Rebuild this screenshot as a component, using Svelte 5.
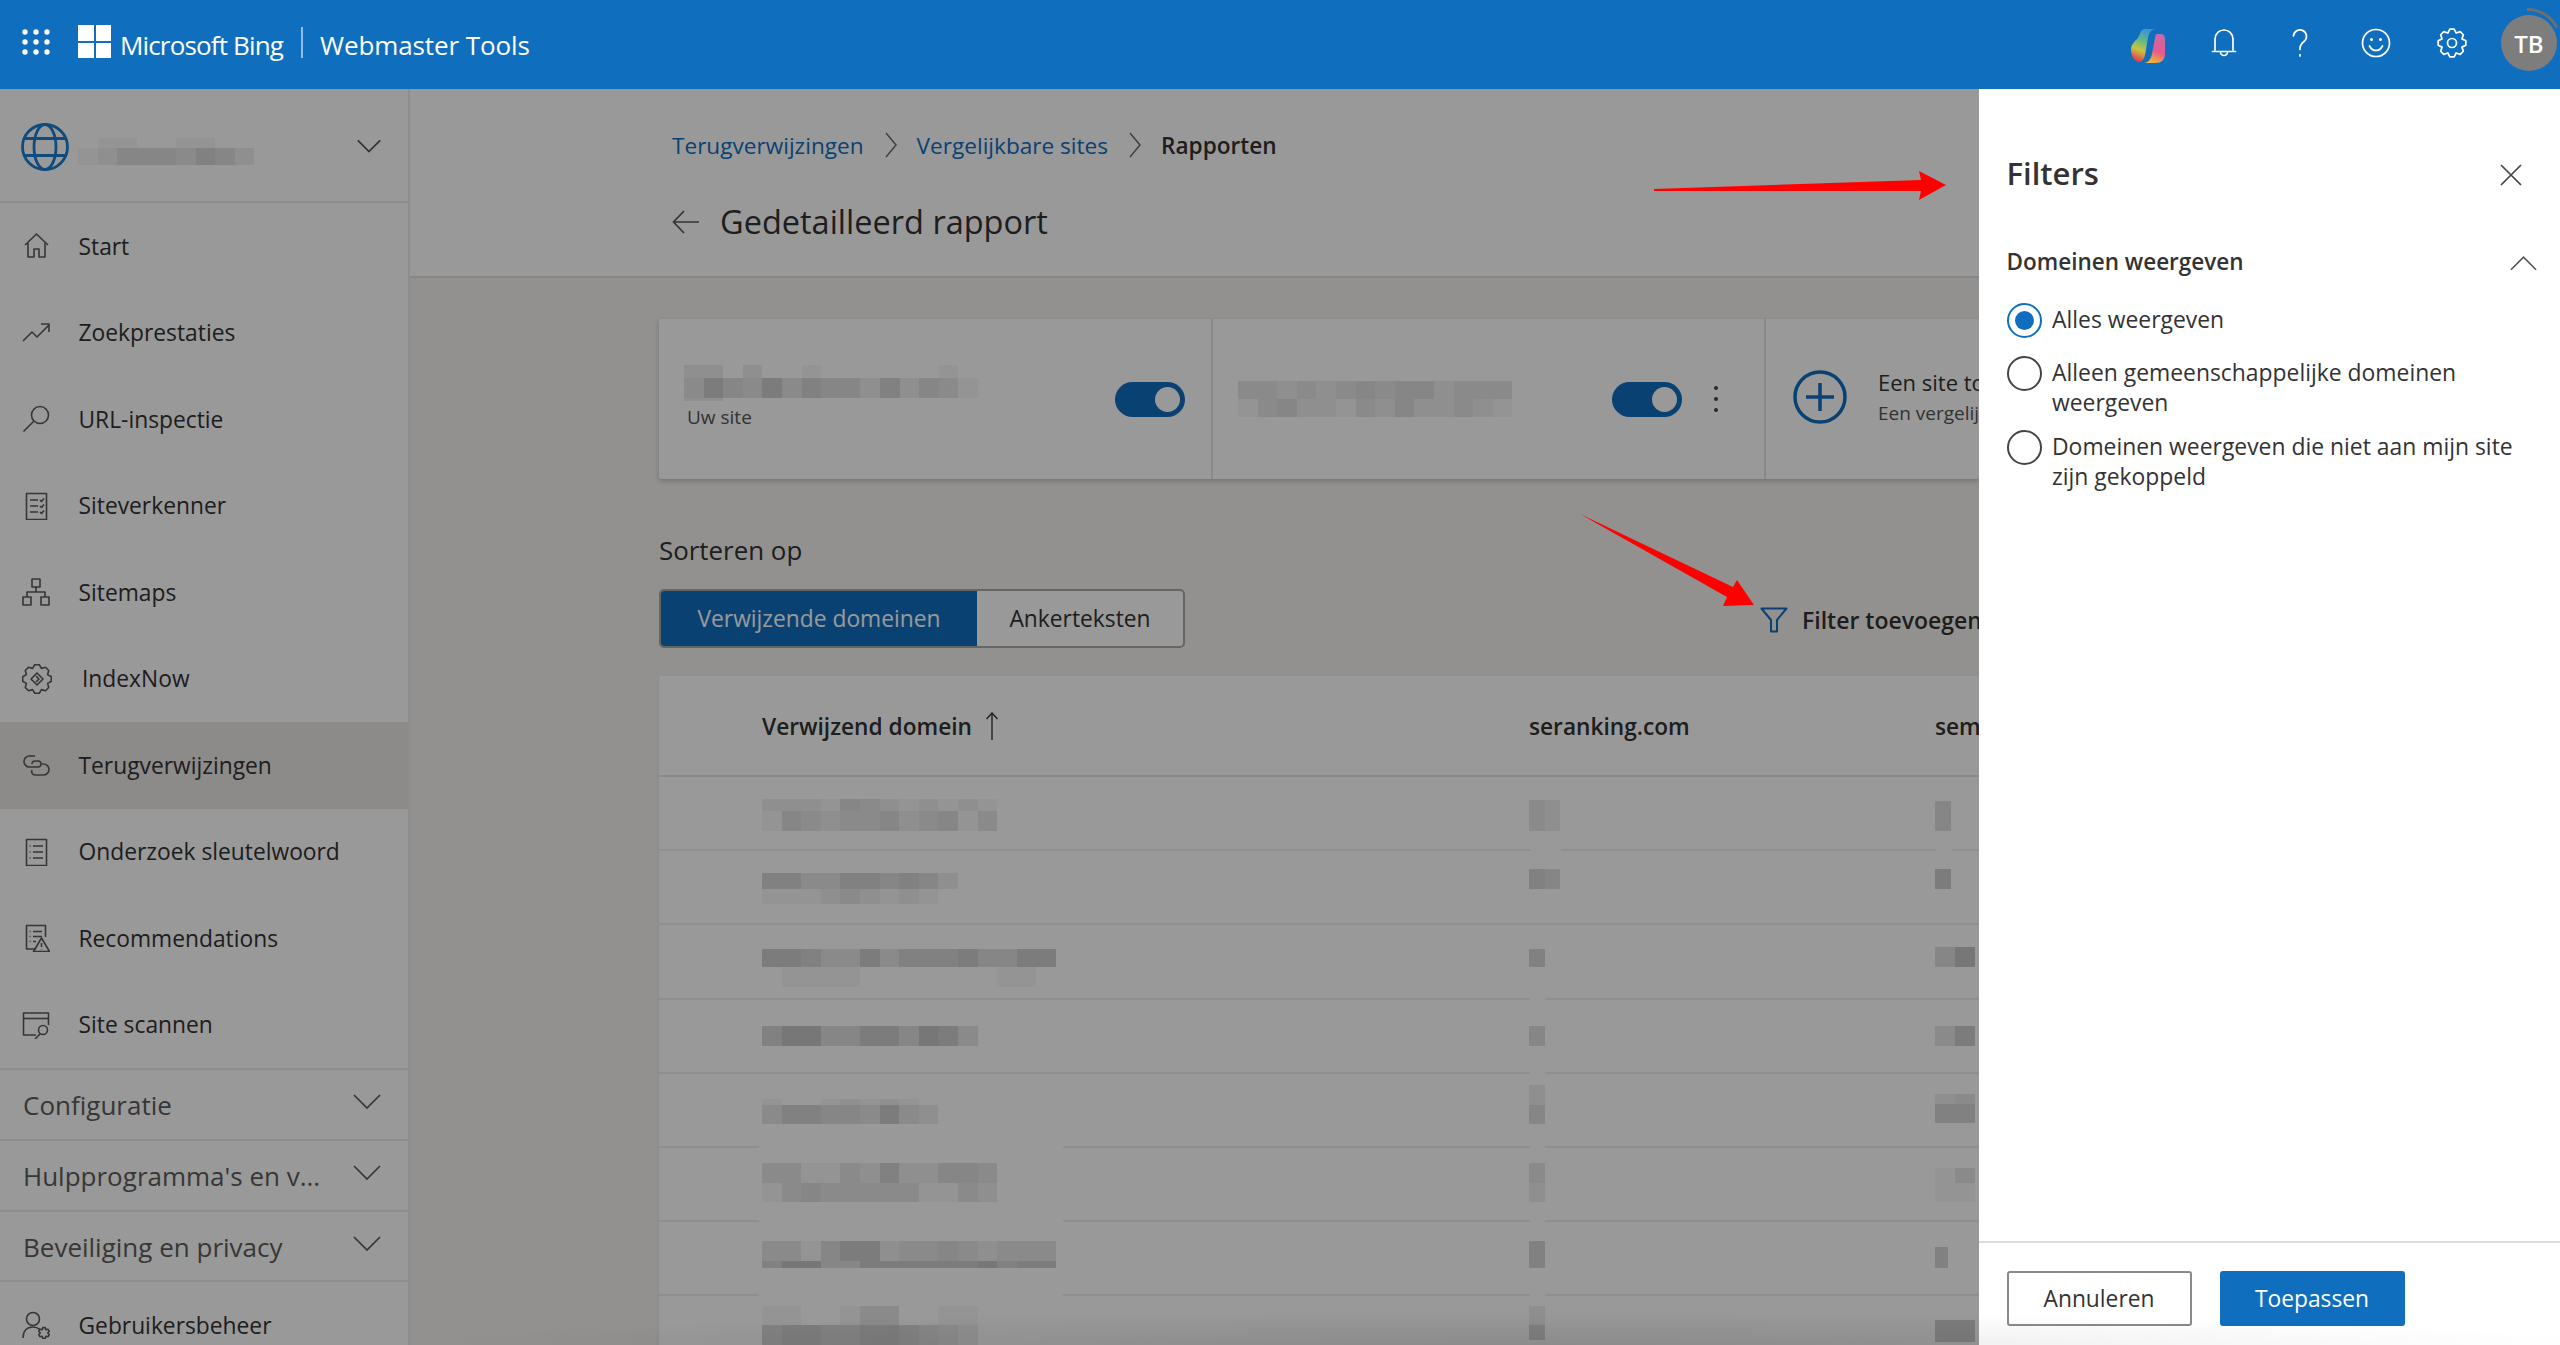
<script>
  function gear(cx, cy, ro, ri, n) {
    let d = '';
    const step = (Math.PI * 2) / n;
    for (let i = 0; i < n; i++) {
      const a = i * step - Math.PI / 2;
      const pts = [
        [ri, a - step * 0.5],
        [ro, a - step * 0.2],
        [ro, a + step * 0.2]
      ];
      for (const [r, t] of pts) {
        const x = (cx + r * Math.cos(t)).toFixed(2);
        const y = (cy + r * Math.sin(t)).toFixed(2);
        d += (d ? 'L' : 'M') + x + ' ' + y;
      }
    }
    return d + 'Z';
  }

  const navTop = [
    { label: 'Start', paths: ['M3 13 14.5 2 26 13', 'M6 11v14h6v-8h5v8h6V11'] },
    { label: 'Zoekprestaties', paths: ['M1 22l9-9 5 5L27 6', 'M19 5h8v8'] },
    { label: 'URL-inspectie', paths: ['M12 16 1.5 26.5'], circles: [[18, 10, 8.5]] },
    { label: 'Siteverkenner', paths: ['M4.5 1.5h20v26h-20z', 'M8 8h8M8 14h8M8 20h8', 'M18 8l1.5 1.5L22 6.5M18 14l1.5 1.5 2.5-3M18 20l1.5 1.5 2.5-3'] },
    { label: 'Sitemaps', paths: ['M10 1h8v8h-8zM1 19h8v8H1zM19 19h8v8h-8z', 'M14 9v5M5 19v-5h18v5'] },
    { label: 'IndexNow', wide: true, paths: [gear(15, 15, 14.5, 11.5, 8), 'M15 9l6 6-6 6-6-6z', 'M14 12l3 3-3 3'] },
    { label: 'Terugverwijzingen', active: true, paths: ['M13 5H7.5a5 5 0 0 0 0 11H16a3 3 0 0 0 0-6h-3a3 3 0 0 0-3 3', 'M15 24h6.5a5 5 0 0 0 0-11H20M15 24h-2a3.500 3.500 0 0 1-3-5'] },
    { label: 'Onderzoek sleutelwoord', paths: ['M4.5 1.5h20v26h-20z', 'M11 8h10M11 14h10M11 20h10', 'M7.500 8h1M7.500 14h1M7.500 20h1'] },
    { label: 'Recommendations', paths: ['M14 25H4.500V1.500h19V13', 'M11 7.500h9M11 12.500h9M11 17.500h3M7.500 7.500h1M7.500 12.500h1M7.500 17.500h1', 'M19.500 14 27.500 27.500h-16z', 'M19.500 19v4M19.500 25v.5'] },
    { label: 'Site scannen', paths: ['M14 24H1.500V2h25v12', 'M1.500 7.500h25', 'M18 23l-5 5'], circles: [[21, 19, 4.5]] }
  ];

  const groups = ['Configuratie', "Hulpprogramma's en v...", 'Beveiliging en privacy'];

  const radios = [
    { text: 'Alles weergeven', on: true },
    { text: 'Alleen gemeenschappelijke domeinen weergeven' },
    { text: 'Domeinen weergeven die niet aan mijn site zijn gekoppeld' }
  ];

  const siteMosaic = { t: 0, w: 19.6, rows: [{ h: 10, s: '011001100' }, { h: 17, s: '124443542' }] };
  const card1 = { t: 0, w: 19.6, rows: [{ h: 13, s: '220200100000010' }, { h: 20, s: '364363544252431' }, { h: 3, s: '220000000000000' }] };
  const card2 = { t: 0, w: 19.6, rows: [{ h: 18, s: '33232343442333' }, { h: 18, s: '13422132422321' }] };

  const tableRows = [
    { a: { t: 22, w: 19.6, rows: [{ h: 12, s: '222143212121' }, { h: 20, s: '143233423413' }] }, b: { t: 23, w: 15.500, rows: [{ h: 31, s: '32' }] }, c: { t: 24, w: 15.500, rows: [{ h: 30, s: '4' }] }, gap: [1529, 1560, 1935, 1951] },
    { a: { t: 22, w: 19.6, rows: [{ h: 16, s: '5533554542' }, { h: 15, s: '1112321210' }] }, b: { t: 18, w: 15.500, rows: [{ h: 20, s: '54' }] }, c: { t: 18, w: 15.500, rows: [{ h: 20, s: '6' }] } },
    { a: { t: 24, w: 19.6, rows: [{ h: 18, s: '665336355564466' }, { h: 20, s: '011110000000110' }] }, b: { t: 24, w: 15.500, rows: [{ h: 18, s: '5' }] }, c: { t: 22, w: 20, rows: [{ h: 20, s: '47' }] }, gap: [1529, 1544] },
    { a: { t: 26, w: 19.6, rows: [{ h: 20, s: '57744664763' }] }, b: { t: 26, w: 15.500, rows: [{ h: 20, s: '4' }] }, c: { t: 26, w: 20, rows: [{ h: 20, s: '36' }] }, gap: [1529, 1544] },
    { a: { t: 25, w: 19.6, rows: [{ h: 6, s: '100121210' }, { h: 19, s: '355443632' }] }, b: { t: 11, w: 15.500, rows: [{ h: 20, s: '2' }, { h: 19, s: '4' }] }, c: { t: 20, w: 20, rows: [{ h: 10, s: '23' }, { h: 19, s: '55' }] }, gap: [758, 1062, 1529, 1544] },
    { a: { t: 15, w: 19.6, rows: [{ h: 20, s: '331132522443' }, { h: 19, s: '134333331132' }] }, b: { t: 15, w: 15.500, rows: [{ h: 20, s: '3' }, { h: 19, s: '2' }] }, c: { t: 20, w: 20, rows: [{ h: 15, s: '13' }, { h: 19, s: '11' }] }, gap: [758, 1062, 1529, 1544] },
    { a: { t: 19, w: 19.6, rows: [{ h: 20, s: '331466233432333' }, { h: 7, s: '577446666667566' }] }, b: { t: 19, w: 15.500, rows: [{ h: 27, s: '5' }] }, c: { t: 25, w: 13, rows: [{ h: 21, s: '5' }] }, gap: [758, 1062, 1529, 1544] },
    { a: { t: 10, w: 19.6, rows: [{ h: 19, s: '110013300110' }, { h: 20, s: '566556654320' }] }, b: { t: 10, w: 15.500, rows: [{ h: 19, s: '2' }, { h: 15, s: '5' }] }, c: { t: 24, w: 20, rows: [{ h: 22, s: '66' }] } }
  ];

  const tones = (s) => s.split('').map((d) => 255 - Number(d) * 8);
</script>

{#snippet mosaic(m)}
  <div class="mosaic" style="margin-top:{m.t}px">
    {#each m.rows as r}
      <div class="mrow" style="height:{r.h}px">
        {#each tones(r.s) as v}
          <span style="width:{m.w}px;background:rgb({v},{v},{v})"></span>
        {/each}
      </div>
    {/each}
  </div>
{/snippet}

{#snippet chevronDown(cls)}
  <svg class={cls} viewBox="0 0 28 15"><path d="M1 1l13 13L27 1" /></svg>
{/snippet}

<div class="app">
  <header class="topbar">
    <svg class="waffle" viewBox="0 0 28 26">
      {#each [3, 13, 23] as y}
        {#each [3, 14, 25] as x}
          <circle cx={x} cy={y} r="2.700" />
        {/each}
      {/each}
    </svg>
    <div class="winlogo"><i></i><i></i><i></i><i></i></div>
    <span class="brand">Microsoft Bing</span>
    <span class="brand-sep"></span>
    <span class="brand second">Webmaster Tools</span>

    <div class="top-actions">
      <div class="tslot">
        <svg class="copilot" viewBox="0 0 34 35">
          <defs>
            <linearGradient id="cpL" x1="0.600" y1="0" x2="0.300" y2="1">
              <stop offset="0" stop-color="#3f8fd8" />
              <stop offset="0.350" stop-color="#5fb98a" />
              <stop offset="0.650" stop-color="#c9c43f" />
              <stop offset="1" stop-color="#e8304f" />
            </linearGradient>
            <linearGradient id="cpR" x1="0.600" y1="0" x2="0.300" y2="1">
              <stop offset="0" stop-color="#c76aa8" />
              <stop offset="0.550" stop-color="#e65a8c" />
              <stop offset="0.850" stop-color="#f0a040" />
              <stop offset="1" stop-color="#f2b83a" />
            </linearGradient>
          </defs>
          <path fill="url(#cpR)" d="M26 6h4c3 0 4 3 4 6v14c0 6-4 9-9 9H13c4 0 7-4 8-9l3-16c.5-3 1-4 2-4z" />
          <path fill="url(#cpL)" d="M14 1h11c-4 0-7 3-8 9l-3 17c-1 5-4 8-7 7-4-1-7-7-7-12 0-6 4-9 7-12 2-4 3-9 7-9z" />
        </svg>
      </div>
      <div class="tslot">
        <svg class="ticon" viewBox="0 0 28 30"><path d="M5 22V11a9 9 0 0 1 18 0v11M2.500 23.500h23M10.500 24a3.500 3.500 0 0 0 7 0" /></svg>
      </div>
      <div class="tslot">
        <svg class="ticon" viewBox="0 0 28 30"><path d="M7.500 8a6.500 6.500 0 1 1 10.500 5.500c-2.500 2-4 3.500-4 7v1M14 26.500v1.500" /></svg>
      </div>
      <div class="tslot">
        <svg class="ticon" viewBox="0 0 30 30"><circle cx="15" cy="15" r="13.500" /><path d="M8.500 18c1.500 3 3.800 4.500 6.500 4.500s5-1.500 6.500-4.500" /><circle class="solid" cx="10.500" cy="11.500" r="1.500" /><circle class="solid" cx="19.500" cy="11.500" r="1.500" /></svg>
      </div>
      <div class="tslot">
        <svg class="ticon" viewBox="0 0 30 30"><path d={gear(15, 15, 14, 10.800, 8)} /><circle cx="15" cy="15" r="4.500" /></svg>
      </div>
      <div class="avatar">
        TB
        <svg class="ring" viewBox="0 0 70 70"><path d="M33 1.500a33 33 0 0 1 30 18" /></svg>
      </div>
    </div>
  </header>

  <div class="body">
    <aside class="sidebar">
      <div class="site-picker">
        <svg class="globe" viewBox="0 0 48 48">
          <circle cx="24" cy="24" r="22.500" />
          <ellipse cx="24" cy="24" rx="11" ry="22.500" />
          <path d="M3.500 15.500h41M3.500 32.500h41" />
        </svg>
        <div class="site-name">{@render mosaic(siteMosaic)}</div>
        {@render chevronDown('site-chev')}
      </div>

      <nav class="nav">
        {#each navTop as item}
          <div class="nav-item" class:active={item.active}>
            <svg class="nav-icon" class:wide={item.wide} viewBox={item.wide ? '0 0 30 30' : '0 0 28 28'}>
              {#each item.paths as d}<path {d} />{/each}
              {#each item.circles ?? [] as c}<circle cx={c[0]} cy={c[1]} r={c[2]} />{/each}
            </svg>
            <span>{item.label}</span>
          </div>
        {/each}
      </nav>

      {#each groups as g}
        <div class="group">
          <span>{g}</span>
          {@render chevronDown('group-chev')}
        </div>
      {/each}

      <div class="nav-item last">
        <svg class="nav-icon" viewBox="0 0 28 28">
          <circle cx="11" cy="8" r="6.500" />
          <path d="M1 27c0-7 4-11 10-11 3 0 5 1 7 2.500" />
          <path d={gear(22, 22, 5.500, 3.800, 6)} />
        </svg>
        <span>Gebruikersbeheer</span>
      </div>
    </aside>

    <main class="main">
      <div class="page-head">
        <div class="crumbs">
          <a href="#a">Terugverwijzingen</a>
          <svg class="crumb-chev" viewBox="0 0 12 26"><path d="M1 1l10 12L1 25" /></svg>
          <a href="#b">Vergelijkbare sites</a>
          <svg class="crumb-chev" viewBox="0 0 12 26"><path d="M1 1l10 12L1 25" /></svg>
          <strong>Rapporten</strong>
        </div>
        <div class="title-row">
          <svg class="back" viewBox="0 0 28 24"><path d="M27 12H2M12 1 1.500 12 12 23" /></svg>
          <h1>Gedetailleerd rapport</h1>
        </div>
      </div>

      <div class="content">
        <section class="sites-card">
          <div class="site-col">
            <div class="site-label">
              {@render mosaic(card1)}
              <small>Uw site</small>
            </div>
            <span class="toggle"><i></i></span>
          </div>
          <div class="site-col">
            <div class="site-label second">{@render mosaic(card2)}</div>
            <span class="toggle"><i></i></span>
            <span class="kebab"><i></i><i></i><i></i></span>
          </div>
          <div class="site-col add">
            <svg class="plus" viewBox="0 0 54 54"><circle cx="27" cy="27" r="25" /><path d="M27 13v28M13 27h28" /></svg>
            <div class="add-text">
              <b>Een site toevoegen</b>
              <small>Een vergelijkbare site toevoegen</small>
            </div>
          </div>
        </section>

        <h2 class="sort-title">Sorteren op</h2>
        <div class="sort-row">
          <div class="segment">
            <span class="seg on">Verwijzende domeinen</span>
            <span class="seg">Ankerteksten</span>
          </div>
          <div class="add-filter">
            <svg class="funnel" viewBox="0 0 28 26"><path d="M1.500 1.500h25L17 13v11.500h-6V13z" /></svg>
            <span>Filter toevoegen</span>
          </div>
        </div>

        <section class="table">
          <div class="thead">
            <div class="th first">
              Verwijzend domein
              <svg class="sort-arrow" viewBox="0 0 14 28"><path d="M7 28V1M1.500 7 7 1l5.500 6" /></svg>
            </div>
            <div class="th">seranking.com</div>
            <div class="th">semrush.com</div>
          </div>
          {#each tableRows as r}
            <div class="tr">
              <div>{@render mosaic(r.a)}</div>
              <div>{@render mosaic(r.b)}</div>
              <div>{@render mosaic(r.c)}</div>
              {#if r.gap}
                {#each r.gap as _, i}
                  {#if i % 2 === 0}
                    <span class="line-gap" style="left:{r.gap[i] - 658}px;width:{r.gap[i + 1] - r.gap[i]}px"></span>
                  {/if}
                {/each}
              {/if}
            </div>
          {/each}
        </section>
      </div>
    </main>
  </div>

  <div class="scrim"></div>

  <aside class="panel">
    <div class="panel-head">
      <h3>Filters</h3>
      <svg class="close" viewBox="0 0 22 22"><path d="M1 1l20 20M21 1 1 21" /></svg>
    </div>
    <div class="section-head">
      <h4>Domeinen weergeven</h4>
      <svg class="section-chev" viewBox="0 0 28 15"><path d="M1 14 14 1l13 13" /></svg>
    </div>
    <div class="radios">
      {#each radios as r}
        <label class="radio">
          <span class="dot" class:on={r.on}></span>
          <span class="radio-text">{r.text}</span>
        </label>
      {/each}
    </div>
    <div class="panel-foot">
      <button class="btn">Annuleren</button>
      <button class="btn primary">Toepassen</button>
    </div>
  </aside>

  <svg class="annot" viewBox="0 0 2560 1345">
    <path d="M1654 189 1921 180 1919 171 1946 185 1919 200 1921 191 1654 191z" />
    <path d="M1580 514 1733 587 1737 580 1754 605 1723 606 1727 597z" />
  </svg>
  <div class="edge-shade"></div>
</div>

<style>
  :global(body) {
    margin: 0;
    background: #fff;
  }
  .app {
    position: relative;
    width: 2560px;
    height: 1345px;
    overflow: hidden;
    display: flex;
    flex-direction: column;
    font-family: "Open Sans", "Noto Sans", sans-serif;
    color: #333;
  }
  svg {
    display: block;
    fill: none;
    flex: none;
  }

  /* top bar */
  .topbar {
    height: 89px;
    flex: none;
    background: #106ebe;
    color: #fff;
    display: flex;
    align-items: center;
    padding-left: 22px;
    box-sizing: border-box;
  }
  .waffle {
    width: 28px;
    height: 26px;
    fill: #fff;
    margin-top: -6px;
  }
  .winlogo {
    width: 33px;
    height: 33px;
    margin-left: 28px;
    margin-top: -6px;
    display: grid;
    grid-template-columns: 1fr 1fr;
    gap: 2px;
  }
  .winlogo i {
    background: #fff;
  }
  .brand {
    font-size: 26px;
    font-weight: 500;
    letter-spacing: -0.85px;
    margin-left: 9px;
    margin-top: 0;
    white-space: nowrap;
  }
  .brand.second {
    margin-left: 17px;
    letter-spacing: -0.1px;
  }
  .brand-sep {
    width: 2px;
    height: 31px;
    margin-left: 18px;
    margin-top: -4px;
    background: #8fbfe6;
  }
  .top-actions {
    margin-left: auto;
    display: flex;
    align-items: center;
    padding-right: 3px;
    margin-top: -3px;
  }
  .tslot {
    width: 76px;
    display: flex;
    justify-content: center;
    position: relative;
    left: -1.5px;
  }
  .copilot {
    width: 34px;
    height: 35px;
    margin-top: 5px;
  }
  .ticon {
    width: 30px;
    height: 30px;
    stroke: #fff;
    stroke-width: 1.700;
    stroke-linejoin: round;
    stroke-linecap: round;
  }
  .ticon .solid {
    fill: #fff;
    stroke: none;
  }
  .avatar {
    position: relative;
    width: 56px;
    height: 56px;
    margin-left: 10px;
    border-radius: 50%;
    background: #7d7d7d;
    color: #fff;
    font-size: 24px;
    font-weight: 600;
    display: flex;
    align-items: center;
    justify-content: center;
  }
  .ring {
    position: absolute;
    left: -7px;
    top: -7px;
    width: 70px;
    height: 70px;
    stroke: #6e6e6e;
    stroke-width: 3;
  }

  .body {
    flex: 1;
    display: flex;
    min-height: 0;
  }

  /* sidebar */
  .sidebar {
    width: 410px;
    flex: none;
    box-sizing: border-box;
    background: #fff;
    border-right: 2px solid #ededed;
    color: #333;
  }
  .site-picker {
    height: 114px;
    box-sizing: border-box;
    border-bottom: 2px solid #ececec;
    display: flex;
    align-items: flex-start;
    padding-left: 21px;
    position: relative;
  }
  .globe {
    width: 48px;
    height: 48px;
    margin-top: 34px;
    stroke: #1a7fd0;
    stroke-width: 2.800;
  }
  .site-name {
    margin-left: 9px;
    margin-top: 49px;
  }
  .site-chev {
    width: 24px;
    height: 14px;
    margin-left: 103px;
    margin-top: 50px;
    stroke: #555;
    stroke-width: 2;
  }
  .mosaic {
    display: flex;
    flex-direction: column;
  }
  .mrow {
    display: flex;
  }
  .mrow span {
    flex: none;
    height: 100%;
  }
  .nav-item {
    height: 86.500px;
    display: flex;
    align-items: center;
    padding-left: 22px;
    font-size: 22.800px;
    white-space: nowrap;
  }
  .nav-item.active {
    background: #e9e8e4;
  }
  .nav-icon {
    width: 28px;
    height: 28px;
    margin-right: 28.500px;
    stroke: #5a5a5a;
    stroke-width: 1.600;
    stroke-linejoin: round;
  }
  .nav-icon.wide {
    width: 30px;
    height: 30px;
    margin-right: 30px;
  }
  .group {
    height: 71px;
    box-sizing: border-box;
    border-top: 2px solid #ececec;
    display: flex;
    align-items: center;
    justify-content: space-between;
    padding: 0 27px 0 23px;
    font-size: 26px;
    color: #5c5c5c;
    white-space: nowrap;
  }
  .nav-item.last {
    border-top: 2px solid #ececec;
    margin-top: -1px;
  }
  .group-chev {
    width: 28px;
    height: 15px;
    margin-top: -6px;
    stroke: #5a5a5a;
    stroke-width: 1.700;
  }

  /* main */
  .main {
    width: 1569px;
    flex: none;
    overflow: hidden;
    background: #f3f2f1;
  }
  .page-head {
    height: 189px;
    box-sizing: border-box;
    background: #fff;
    border-bottom: 2px solid #e2e2e2;
    padding: 35px 0 0 262px;
  }
  .crumbs {
    display: flex;
    align-items: center;
    height: 42px;
    font-size: 22.600px;
    white-space: nowrap;
  }
  .crumbs a {
    color: #106ebe;
    text-decoration: none;
  }
  .crumbs strong {
    font-weight: 600;
    color: #333;
  }
  .crumb-chev {
    width: 12px;
    height: 26px;
    margin: 0 20px 0 21px;
    stroke: #6a6a6a;
    stroke-width: 1.500;
  }
  .title-row {
    display: flex;
    align-items: center;
    margin-top: 34px;
  }
  .back {
    width: 28px;
    height: 24px;
    stroke: #555;
    stroke-width: 1.700;
  }
  h1 {
    margin: 0 0 0 20px;
    font-size: 32.500px;
    line-height: 44px;
    font-weight: 400;
    color: #333;
    white-space: nowrap;
  }
  .content {
    padding: 41px 0 0 249px;
  }
  .sites-card {
    height: 160px;
    background: #fff;
    border-radius: 2px;
    display: grid;
    grid-template-columns: 554px 553px 1fr;
    box-shadow: 0 2px 5px rgba(0, 0, 0, 0.22);
  }
  .site-col {
    display: flex;
    align-items: center;
    padding: 0 26px 0 25px;
    border-right: 2px solid #e4e4e4;
    position: relative;
    white-space: nowrap;
    overflow: hidden;
  }
  .site-col.add {
    border-right: 0;
    padding-left: 27px;
  }
  .site-label {
    flex: 1;
    margin-top: -2px;
    align-self: flex-start;
    padding-top: 48px;
  }
  .site-label.second {
    padding-top: 64px;
    padding-left: 0;
  }
  .site-col small {
    display: block;
    font-size: 19px;
    line-height: 24px;
    color: #555;
    margin-left: 3px;
    margin-top: 4px;
  }
  .toggle {
    width: 70px;
    height: 35px;
    border-radius: 18px;
    background: #106ebe;
    display: flex;
    align-items: center;
    justify-content: flex-end;
    padding-right: 5px;
    box-sizing: border-box;
    flex: none;
  }
  .toggle i {
    width: 25px;
    height: 25px;
    border-radius: 50%;
    background: #fff;
  }
  .kebab {
    display: flex;
    flex-direction: column;
    gap: 7px;
    margin: 0 46px 0 32px;
  }
  .kebab i {
    width: 4px;
    height: 4px;
    border-radius: 50%;
    background: #444;
  }
  .site-col:nth-child(2) {
    padding-right: 0;
  }
  .plus {
    width: 54px;
    height: 54px;
    stroke: #106ebe;
    stroke-width: 3.500;
    margin-top: -4px;
  }
  .add-text {
    margin-left: 31px;
    white-space: nowrap;
    margin-top: -6px;
  }
  .add-text b {
    display: block;
    font-weight: 500;
    font-size: 22px;
    line-height: 30px;
  }
  .add-text small {
    margin-left: 0;
  }
  .sort-title {
    margin: 53px 0 0;
    font-size: 25.900px;
    line-height: 36px;
    font-weight: 400;
    color: #333;
  }
  .sort-row {
    margin-top: 21px;
    display: flex;
    align-items: center;
    white-space: nowrap;
  }
  .segment {
    display: flex;
    width: 526px;
    height: 59px;
    box-sizing: border-box;
    border: 2px solid #a8a8a8;
    border-radius: 5px;
    overflow: hidden;
    background: #fff;
    font-size: 22.800px;
    flex: none;
  }
  .seg {
    display: flex;
    align-items: center;
    justify-content: center;
    flex: 1;
    color: #333;
  }
  .seg.on {
    flex: none;
    width: 316px;
    background: #106ebe;
    color: #fff;
  }
  .add-filter {
    display: flex;
    align-items: center;
    margin-left: 575px;
    font-size: 23px;
    font-weight: 600;
    margin-top: 3px;
  }
  .funnel {
    width: 28px;
    height: 26px;
    stroke: #106ebe;
    stroke-width: 2;
    stroke-linejoin: round;
    margin-right: 14px;
  }
  .table {
    margin-top: 28px;
    background: #fff;
    height: 700px;
    border-radius: 2px;
    box-shadow: 0 1px 3px rgba(0, 0, 0, 0.1);
    overflow: hidden;
  }
  .thead,
  .tr {
    display: grid;
    grid-template-columns: 767px 406px 1fr;
    padding-left: 103px;
    box-sizing: border-box;
    position: relative;
    overflow: visible;
  }
  .thead {
    height: 101px;
    align-items: center;
    border-bottom: 2px solid #e6e6e6;
  }
  .th {
    font-size: 22.700px;
    font-weight: 600;
    white-space: nowrap;
    color: #333;
    margin-top: 1px;
  }
  .th.first {
    display: flex;
    align-items: center;
    gap: 13px;
  }
  .sort-arrow {
    width: 14px;
    height: 28px;
    stroke: #444;
    stroke-width: 1.500;
  }
  .tr {
    height: 74.200px;
    border-bottom: 2px solid #eeeeee;
  }
  .line-gap {
    position: absolute;
    bottom: -2px;
    height: 2px;
    background: #fff;
  }

  /* overlays */
  .scrim {
    position: absolute;
    left: 0;
    right: 0;
    top: 89px;
    bottom: 0;
    background: rgba(0, 0, 0, 0.4);
  }
  .panel {
    position: absolute;
    top: 89px;
    right: 0;
    bottom: 0;
    width: 581px;
    background: #fff;
    padding-left: 27.500px;
    box-sizing: border-box;
    display: flex;
    flex-direction: column;
  }
  .panel-head {
    display: flex;
    align-items: center;
    justify-content: space-between;
    padding: 59px 38px 0 0;
  }
  h3 {
    margin: 0;
    font-size: 31px;
    line-height: 50px;
    font-weight: 600;
    color: #333;
  }
  .close {
    width: 22px;
    height: 22px;
    stroke: #444;
    stroke-width: 1.700;
    margin-top: 3px;
  }
  .section-head {
    display: flex;
    align-items: center;
    justify-content: space-between;
    padding: 48px 23px 0 0;
  }
  h4 {
    margin: 0;
    font-size: 22.500px;
    line-height: 32px;
    font-weight: 600;
    color: #333;
  }
  .section-chev {
    width: 27px;
    height: 15px;
    stroke: #555;
    stroke-width: 1.700;
    margin-top: 3px;
  }
  .radios {
    margin-top: 27px;
    display: flex;
    flex-direction: column;
    gap: 14px;
    padding-right: 30px;
  }
  .radio {
    display: flex;
    align-items: flex-start;
  }
  .radio:nth-child(2) {
    margin-top: 6px;
  }
  .radio:nth-child(3) {
    margin-top: 0;
  }
  .dot {
    width: 35px;
    height: 35px;
    box-sizing: border-box;
    border: 2px solid #444;
    border-radius: 50%;
    flex: none;
    margin-top: -2px;
    display: flex;
    align-items: center;
    justify-content: center;
  }
  .dot.on {
    border-color: #106ebe;
  }
  .dot.on::after {
    content: "";
    width: 19px;
    height: 19px;
    border-radius: 50%;
    background: #106ebe;
  }
  .radio-text {
    margin-left: 10.500px;
    font-size: 22.900px;
    line-height: 30px;
    color: #333;
  }
  .panel-foot {
    margin-top: auto;
    margin-left: -27.500px;
    padding: 28px 0 19px 27.500px;
    border-top: 2px solid #dcdce4;
    display: flex;
    gap: 28px;
  }
  .btn {
    width: 185px;
    height: 55px;
    box-sizing: border-box;
    border: 2px solid #8a8a8a;
    border-radius: 3px;
    background: #fff;
    color: #333;
    font: 500 22.800px "Open Sans", sans-serif;
    padding: 0;
  }
  .btn.primary {
    border-color: #106ebe;
    background: #106ebe;
    color: #fff;
  }
  .annot {
    position: absolute;
    inset: 0;
    width: 2560px;
    height: 1345px;
    fill: #ff0000;
    pointer-events: none;
  }
  .edge-shade {
    position: absolute;
    left: 0;
    right: 0;
    bottom: 0;
    height: 34px;
    pointer-events: none;
    background: radial-gradient(ellipse 1100px 34px at 1500px 100%, rgba(0, 0, 0, 0.09), rgba(0, 0, 0, 0));
  }
</style>
